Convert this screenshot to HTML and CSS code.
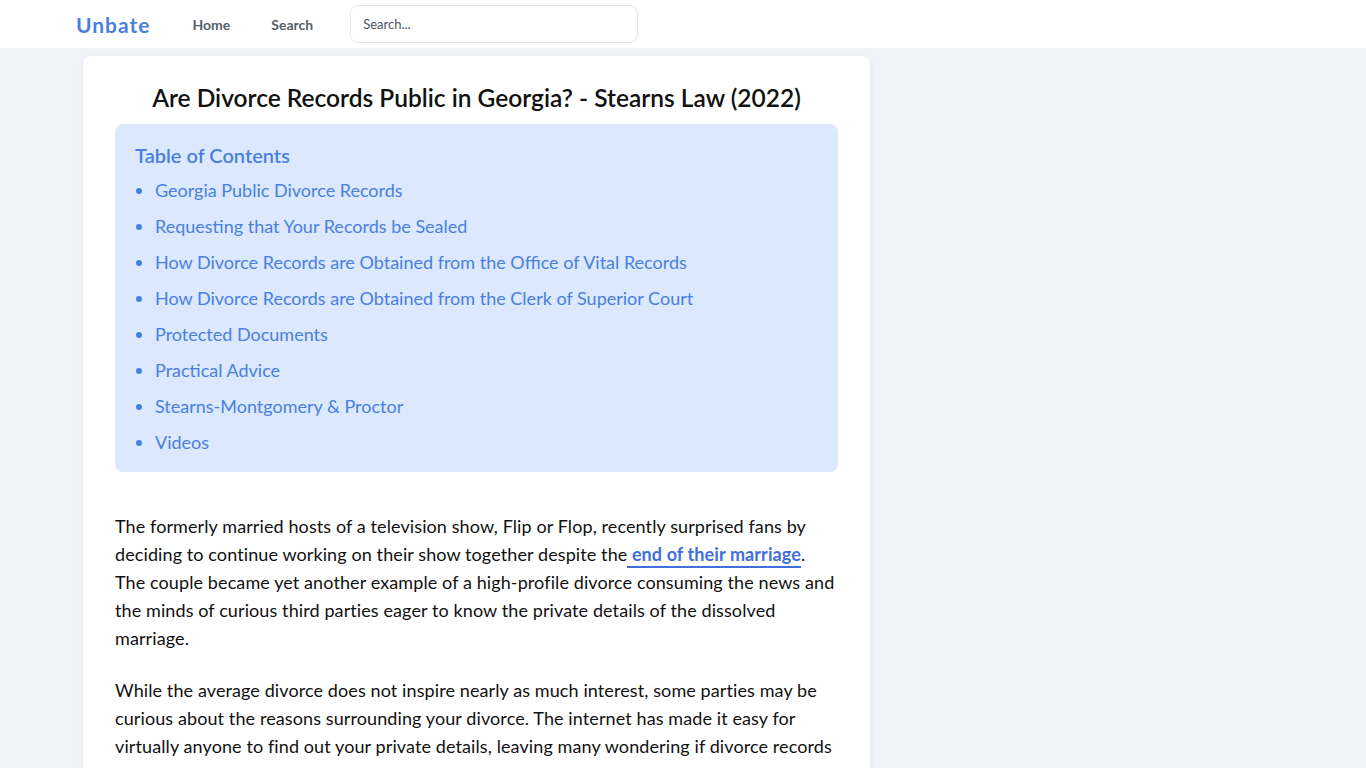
FILE: index.html
```html
<!DOCTYPE html>
<html lang="en">
<head>
  <meta charset="UTF-8" />
  <meta name="viewport" content="width=device-width, initial-scale=1.0"/>
  <title>Are Divorce Records Public in Georgia? - Stearns Law (2022)</title>
  <link rel="stylesheet" href="styles.css">
</head>
<body>
  <header class="topbar">
    <a href="#" class="brand">Unbate</a>
    <nav class="nav">
      <a href="#">Home</a>
      <a href="#">Search</a>
    </nav>
    <input type="text" class="search" placeholder="Search...">
  </header>

  <main class="page">
    <article class="card">
      <h1>Are Divorce Records Public in Georgia? - Stearns Law (2022)</h1>

      <!-- Table of contents -->
      <div class="toc">
        <h2>Table of Contents</h2>
        <ul>
          <li><a href="#">Georgia Public Divorce Records</a></li>
          <li><a href="#">Requesting that Your Records be Sealed</a></li>
          <li><a href="#">How Divorce Records are Obtained from the Office of Vital Records</a></li>
          <li><a href="#">How Divorce Records are Obtained from the Clerk of Superior Court</a></li>
          <li><a href="#">Protected Documents</a></li>
          <li><a href="#">Practical Advice</a></li>
          <li><a href="#">Stearns-Montgomery &amp; Proctor</a></li>
          <li><a href="#">Videos</a></li>
        </ul>
      </div>

      <div class="body">
        <p>The formerly married hosts of a television show, Flip or Flop, recently surprised fans by deciding to continue working on their show together despite the<a href="#" class="inline-link"> end of their marriage</a>. The couple became yet another example of a high-profile divorce consuming the news and the minds of curious third parties eager to know the private details of the dissolved marriage.</p>
        <p>While the average divorce does not inspire nearly as much interest, some parties may be curious about the reasons surrounding your divorce. The internet has made it easy for virtually anyone to find out your private details, leaving many wondering if divorce records are public.</p>
      </div>
    </article>
  </main>
</body>
</html>
```

FILE: styles.css
```css
body {
  font-family: 'Lato', 'Noto Sans', sans-serif;
  margin: 0;
  padding: 0;
  background-color: #f0f3f8;
  color: #111;
}
a {
  text-decoration: none;
}
.topbar {
  display: flex;
  align-items: center;
  height: 48px;
  padding-left: 76px;
  background-color: #fff;
}
.brand {
  font-size: 21px;
  font-weight: 700;
  letter-spacing: 1px;
  color: #4a7fe0;
}
.nav {
  display: flex;
  gap: 41px;
  margin-left: 42px;
}
.nav a {
  font-size: 14px;
  font-weight: 700;
  color: #555d6b;
}
.search {
  margin-left: 37px;
  width: 288px;
  height: 38px;
  box-sizing: border-box;
  padding: 0 12px;
  border: 1px solid #e2e5ea;
  border-radius: 8px;
  font-family: inherit;
  font-size: 13px;
  color: #333;
}
.search::placeholder {
  color: #4b5563;
}
.page {
  padding: 8px 0 0 83px;
}
.card {
  width: 787px;
  box-sizing: border-box;
  padding: 24px 32px 32px;
  background-color: #fff;
  border-radius: 8px;
  box-shadow: 0 1px 6px rgba(0,0,0,0.06);
}
h1 {
  margin: 0 0 8px;
  text-align: center;
  font-size: 24.5px;
  font-weight: 600;
  line-height: 36px;
  color: #111;
}
.toc {
  padding: 16px 20px 12px;
  background-color: #dbe8fd;
  border-radius: 8px;
}
.toc h2 {
  margin: 0 0 2px;
  font-size: 20px;
  font-weight: 600;
  line-height: 30px;
  color: #4a7fe0;
}
.toc ul {
  margin: 0;
  padding-left: 20px;
}
.toc li {
  font-size: 18px;
  line-height: 36px;
  color: #4a7fe0;
}
.toc a {
  color: #4a80e0;
}
.body {
  margin-top: 40px;
}
.body p {
  margin: 0 0 24px;
  font-size: 18px;
  line-height: 28px;
  letter-spacing: 0.1px;
}
.inline-link {
  font-weight: 700;
  color: #3f6fdc;
  border-bottom: 2px solid #3f6fdc;
  padding-bottom: 1px;
}
```
